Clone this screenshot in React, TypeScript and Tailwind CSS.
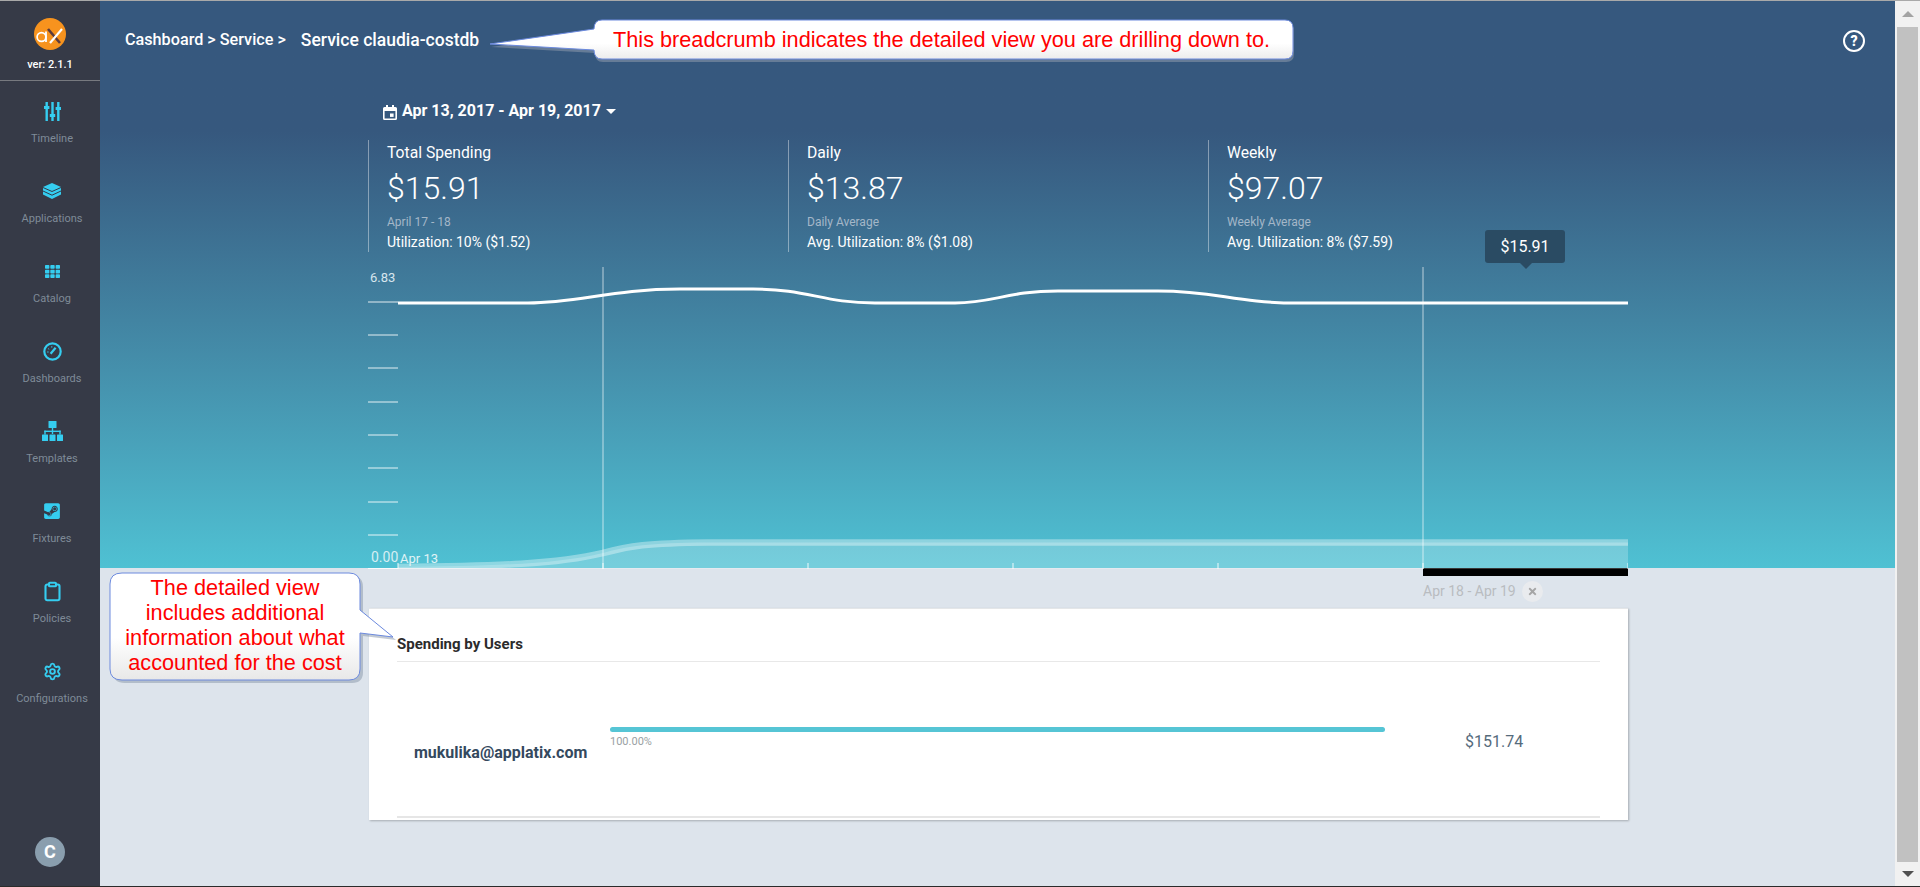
import React from 'react';
import { Clipboard, Settings } from 'lucide-react';
import { FaSteamSquare, FaTh, FaTimes } from 'react-icons/fa';

const CYAN = '#35cdf0';

const Sliders = () => (
  <svg width="17" height="19" viewBox="0 0 17 19" fill={CYAN}>
    <rect x="1.5" y="0" width="2.4" height="19" />
    <rect x="0" y="4" width="5.4" height="3" />
    <rect x="7.3" y="0" width="2.4" height="19" />
    <rect x="5.8" y="12" width="5.4" height="3" />
    <rect x="13.1" y="0" width="2.4" height="19" />
    <rect x="11.6" y="5" width="5.4" height="3" />
  </svg>
);

const Layers = () => (
  <svg width="18" height="16" viewBox="0 0 18 16">
    <path d="M9 0 L18 4 V11.5 L9 16 L0 11.5 V4 Z" fill={CYAN} />
    <path d="M0 4.5 L9 8.5 L18 4.5 M0 8 L9 12.2 L18 8" fill="none" stroke="#363a47" strokeWidth="1" />
  </svg>
);

const Dial = () => (
  <svg width="19" height="19" viewBox="0 0 19 19" fill="none" stroke={CYAN}>
    <circle cx="9.5" cy="9.5" r="8.2" strokeWidth="2.2" />
    <path d="M7.6 11.8 L12.6 5.8" strokeWidth="2.2" />
    <path d="M4.2 10 H5.6 M5.2 6.6 L6.2 7.4 M8.8 4.2 V5.6" strokeWidth="1" />
  </svg>
);

const Tree = () => (
  <svg width="21" height="20" viewBox="0 0 21 20" fill={CYAN}>
    <rect x="6.5" y="0" width="8" height="7" rx="0.5" />
    <rect x="9.8" y="7" width="1.4" height="6" />
    <rect x="2.3" y="9.6" width="16.4" height="1.4" />
    <rect x="2.3" y="9.6" width="1.4" height="4" />
    <rect x="17.3" y="9.6" width="1.4" height="4" />
    <rect x="0" y="13.5" width="6" height="6.5" rx="0.5" />
    <rect x="7.5" y="13.5" width="6" height="6.5" rx="0.5" />
    <rect x="15" y="13.5" width="6" height="6.5" rx="0.5" />
  </svg>
);

const DateIcon = () => (
  <svg width="14" height="15" viewBox="0 0 14 15" fill="#ffffff">
    <rect x="3" y="0" width="2" height="3" />
    <rect x="9" y="0" width="2" height="3" />
    <path d="M1.5 2 H12.5 A1.5 1.5 0 0 1 14 3.5 V13.5 A1.5 1.5 0 0 1 12.5 15 H1.5 A1.5 1.5 0 0 1 0 13.5 V3.5 A1.5 1.5 0 0 1 1.5 2 Z M1.6 6 V13.4 H12.4 V6 Z" fillRule="evenodd" />
    <rect x="7" y="8.5" width="3.6" height="3.4" />
  </svg>
);

const Logo = () => (
  <svg width="32" height="32" viewBox="0 0 32 32">
    <circle cx="16" cy="16" r="16" fill="#f7931e" />
    <circle cx="7.5" cy="19" r="4.4" fill="none" stroke="#fff" strokeWidth="1.7" />
    <path d="M12 13.5 V24" stroke="#fff" strokeWidth="1.8" fill="none" />
    <path d="M14 11 L26 25" stroke="#5c3b3d" strokeWidth="2.6" fill="none" />
    <path d="M28 11 L16 25" stroke="#fff" strokeWidth="2.2" fill="none" />
  </svg>
);

const navItems = [
  { label: 'Timeline', icon: <Sliders /> },
  { label: 'Applications', icon: <Layers /> },
  { label: 'Catalog', icon: <FaTh size={15} color={CYAN} /> },
  { label: 'Dashboards', icon: <Dial /> },
  { label: 'Templates', icon: <Tree /> },
  { label: 'Fixtures', icon: <FaSteamSquare size={18} color={CYAN} /> },
  { label: 'Policies', icon: <Clipboard size={21} color={CYAN} strokeWidth={2.4} /> },
  { label: 'Configurations', icon: <Settings size={19} color={CYAN} strokeWidth={2.4} /> },
];

const stats = [
  { title: 'Total Spending', value: '$15.91', sub: 'April 17 - 18', util: 'Utilization: 10% ($1.52)' },
  { title: 'Daily', value: '$13.87', sub: 'Daily Average', util: 'Avg. Utilization: 8% ($1.08)' },
  { title: 'Weekly', value: '$97.07', sub: 'Weekly Average', util: 'Avg. Utilization: 8% ($7.59)' },
];

const yTicks = [35, 68, 101, 135, 168, 201, 235, 268];
const xTicks = [30, 235, 440, 645, 850, 1055, 1260];

const Sidebar = () => (
  <aside className="flex h-full w-[100px] shrink-0 flex-col bg-[#363a47]">
    <div className="flex h-[80px] flex-col items-center border-b border-[#77797f] pt-[17px]">
      <Logo />
      <div className="mt-[7px] text-[11px] font-medium leading-[16px] text-white">ver: 2.1.1</div>
    </div>
    <nav className="flex flex-col pl-[4px]">
      {navItems.map((item) => (
        <div key={item.label} className="flex h-[80px] flex-col items-center pt-[19px]">
          <div className="flex h-[22px] items-center justify-center">{item.icon}</div>
          <div className="mt-[9px] text-[11px] leading-[16px] text-[#7f8b98]">{item.label}</div>
        </div>
      ))}
    </nav>
    <div className="mt-auto flex justify-center pb-[19px]">
      <div className="flex h-[30px] w-[30px] items-center justify-center rounded-full bg-[#8a9eae] pb-[2px] text-[18px] font-bold text-white">
        C
      </div>
    </div>
  </aside>
);

const Chart = () => (
  <div className="relative h-[302px] w-[1260px]">
    <svg width="1260" height="302" viewBox="0 0 1260 302" className="block">
      {yTicks.map((y) => (
        <line key={y} x1="0" x2="30" y1={y} y2={y} stroke="#ffffff" strokeOpacity="0.85" strokeWidth="1" />
      ))}
      <line x1="0" x2="30" y1="301.5" y2="301.5" stroke="#ffffff" strokeOpacity="0.85" strokeWidth="1" />
      <path
        d="M30 302 L30 300 C130 299 190 297 235 286 C260 279 280 276 340 275.5 L1260 275.5 L1260 302 Z"
        fill="#ffffff"
        fillOpacity="0.22"
      />
      <path
        d="M30 300 C130 299 190 297 235 286 C260 279 280 276 340 275.5 L1260 275.5"
        fill="none"
        stroke="#ffffff"
        strokeOpacity="0.36"
        strokeWidth="6.5"
      />
      {xTicks.map((x) => (
        <line key={x} x1={x} x2={x} y1="296" y2="302" stroke="#ffffff" strokeOpacity="0.6" strokeWidth="1.5" />
      ))}
      <line x1="235" x2="235" y1="0" y2="302" stroke="#ffffff" strokeOpacity="0.5" strokeWidth="1.3" />
      <line x1="1055" x2="1055" y1="0" y2="302" stroke="#ffffff" strokeOpacity="0.5" strokeWidth="1.3" />
      <path
        d="M30 36 L160 36 C210 36 245 22 312 22 L385 22 C440 22 455 36 507 36 L587 36 C625 36 640 24 690 24 L790 24 C850 24 865 36 930 36 L1260 36"
        fill="none"
        stroke="#ffffff"
        strokeWidth="3"
      />
    </svg>
    <span className="absolute left-[2px] top-[3px] text-[13px] leading-[16px] text-[#d7e6ee]">6.83</span>
    <span className="absolute left-[3px] top-[282px] text-[14px] leading-[16px] text-[#d7eef3]">0.00</span>
    <span className="absolute left-[32px] top-[284px] text-[13px] leading-[16px] text-[#e0f3f6]">Apr 13</span>
    <div className="absolute left-[1117px] top-[-37px] flex h-[33px] w-[80px] items-center justify-center rounded-[3px] bg-[#2a4b63] text-[16px] leading-none text-white">
      $15.91
      <span className="absolute left-[35px] top-[33px] h-0 w-0 border-x-[6px] border-t-[6px] border-x-transparent border-t-[#2a4b63]" />
    </div>
  </div>
);

const Hero = () => (
  <section className="h-[567px] bg-gradient-to-b from-[#36587e] from-[23%] to-[#4fc1d3]">
    <div className="flex h-[80px] items-center pl-[25px] pr-[30px] pb-[1px] text-white">
      <span className="text-[16.2px] font-medium">Cashboard &gt; Service &gt;</span>
      <span className="ml-[15px] text-[17.5px] font-medium">Service claudia-costdb</span>
      <span className="ml-auto flex h-[22px] w-[22px] items-center justify-center rounded-full border-[2.5px] border-white text-[14px] font-black leading-none">
        ?
      </span>
    </div>
    <div className="ml-[268px] w-[1260px]">
      <div className="flex h-[59px] items-start pl-[15px] pt-[20px] text-white">
        <span className="mt-[4px]">
          <DateIcon />
        </span>
        <span className="ml-[5px] text-[16px] font-bold leading-[20px]">Apr 13, 2017 - Apr 19, 2017</span>
        <span className="ml-[5px] mt-[8px] h-0 w-0 border-x-[5px] border-t-[5px] border-x-transparent border-t-white" />
      </div>
      <div className="grid h-[112px] grid-cols-3">
        {stats.map((s) => (
          <div key={s.title} className="border-l border-white/40 pl-[18px] text-white">
            <div className="pt-px text-[15.7px] leading-[24px]">{s.title}</div>
            <div className="mt-px text-[32px] font-light leading-[44px]">{s.value}</div>
            <div className="mt-[4px] text-[12px] leading-[16px] text-[#a4b7c8]">{s.sub}</div>
            <div className="mt-[2px] text-[14px] leading-[20px]">{s.util}</div>
          </div>
        ))}
      </div>
      <div className="mt-[15px]">
        <Chart />
      </div>
    </div>
  </section>
);

const Detail = () => (
  <section className="ml-[268px] w-[1260px]">
    <div className="ml-[1055px] h-[8px] w-[205px] bg-black" />
    <div className="flex h-[32px] items-center pb-[2px] pl-[1055px]">
      <span className="text-[14px] leading-[16px] text-[#b9bcc0]">Apr 18 - Apr 19</span>
      <span className="ml-[6px] flex h-[21px] w-[21px] items-center justify-center rounded-full bg-[#e9ebee] text-[#a5a5a5]">
        <FaTimes size={11} />
      </span>
    </div>
    <div className="ml-px h-[212px] border-t border-[#e4e6e8] bg-white px-[28px] shadow-[1px_1px_2px_rgba(0,0,0,0.25)]">
      <div className="flex h-[53px] items-end border-b border-[#e8e8e8] pb-[6px] text-[15px] font-bold text-[#2b2b2b]">
        Spending by Users
      </div>
      <div className="flex h-[156px] border-b-2 border-[#e6e6e6]">
        <div className="w-[213px] pl-[17px] pt-[81px] text-[16px] font-bold leading-[20px] text-[#34495e]">
          mukulika@applatix.com
        </div>
        <div className="w-[775px] pt-[65px]">
          <div className="h-[5px] rounded-full bg-[#56c5d5]" />
          <div className="mt-[3px] text-[11px] leading-[14px] text-[#9a9fa4]">100.00%</div>
        </div>
        <div className="pl-[80px] pt-[70px] text-[16px] leading-[20px] text-[#566b7c]">$151.74</div>
      </div>
    </div>
  </section>
);

const Scrollbar = () => (
  <div className="flex h-full w-[25px] shrink-0 flex-col items-center bg-[#f1f1f1]">
    <div className="flex h-[26px] items-center justify-center">
      <span className="h-0 w-0 border-x-[6px] border-b-[6px] border-x-transparent border-b-[#a3a3a3]" />
    </div>
    <div className="w-[21px] flex-1 bg-[#c1c1c1]" />
    <div className="flex h-[24px] items-center justify-center">
      <span className="h-0 w-0 border-x-[6px] border-t-[6px] border-x-transparent border-t-[#505050]" />
    </div>
  </div>
);

const TOP_BALLOON = 'M2 26 L106 11 Q106 2 114 2 L797 2 Q805 2 805 10 L805 33 Q805 41 797 41 L114 41 Q106 41 106 32 Z';
const SIDE_BALLOON =
  'M14 2 L241 2 Q252 2 252 13 L252 39 L285 66 L252 62 L252 98 Q252 109 241 109 L14 109 Q2 109 2 98 L2 13 Q2 2 14 2 Z';

// annotation balloons laid on top of the page
const TopCallout = () => (
  <div className="absolute left-[488px] top-[18px] h-[46px] w-[810px]">
    <svg width="810" height="46" viewBox="0 0 810 46" className="absolute inset-0">
      <defs>
        <linearGradient id="balloonA" x1="0" y1="0" x2="0" y2="1">
          <stop offset="0" stopColor="#ffffff" />
          <stop offset="0.6" stopColor="#ffffff" />
          <stop offset="1" stopColor="#ececec" />
        </linearGradient>
      </defs>
      <path d={TOP_BALLOON} fill="#8795a8" transform="translate(1 3)" opacity="0.6" />
      <path d={TOP_BALLOON} fill="url(#balloonA)" stroke="#6c8ade" strokeWidth="1" />
    </svg>
    <span className="absolute left-[125px] top-[9px] whitespace-nowrap text-[21.7px] leading-[26px] text-[#ff0000] [font-family:'Liberation_Sans',sans-serif]">
      This breadcrumb indicates the detailed view you are drilling down to.
    </span>
  </div>
);

const SideCallout = () => (
  <div className="absolute left-[108px] top-[571px] h-[116px] w-[290px]">
    <svg width="290" height="116" viewBox="0 0 290 116" className="absolute inset-0">
      <defs>
        <linearGradient id="balloonB" x1="0" y1="0" x2="0" y2="1">
          <stop offset="0" stopColor="#ffffff" />
          <stop offset="0.6" stopColor="#ffffff" />
          <stop offset="1" stopColor="#e8e8e8" />
        </linearGradient>
      </defs>
      <path d={SIDE_BALLOON} fill="#8795a8" transform="translate(3 3)" opacity="0.5" />
      <path d={SIDE_BALLOON} fill="url(#balloonB)" stroke="#6c8ade" strokeWidth="1" />
    </svg>
    <div className="absolute left-[2px] top-[4px] w-[250px] text-center text-[21.7px] leading-[25px] text-[#ff0000] [font-family:'Liberation_Sans',sans-serif]">
      The detailed view
      <br />
      includes additional
      <br />
      information about what
      <br />
      accounted for the cost
    </div>
  </div>
);

export default function App() {
  return (
    <div className="relative flex h-[887px] w-[1920px] flex-col overflow-hidden bg-[#dde4ec] font-['Roboto',sans-serif]">
      <div className="h-px shrink-0 bg-[#a9a9a9]" />
      <div className="flex min-h-0 flex-1">
        <Sidebar />
        <main className="min-w-0 flex-1">
          <Hero />
          <Detail />
        </main>
        <Scrollbar />
      </div>
      <div className="h-px shrink-0 bg-[#2b2b2b]" />
      <TopCallout />
      <SideCallout />
    </div>
  );
}
